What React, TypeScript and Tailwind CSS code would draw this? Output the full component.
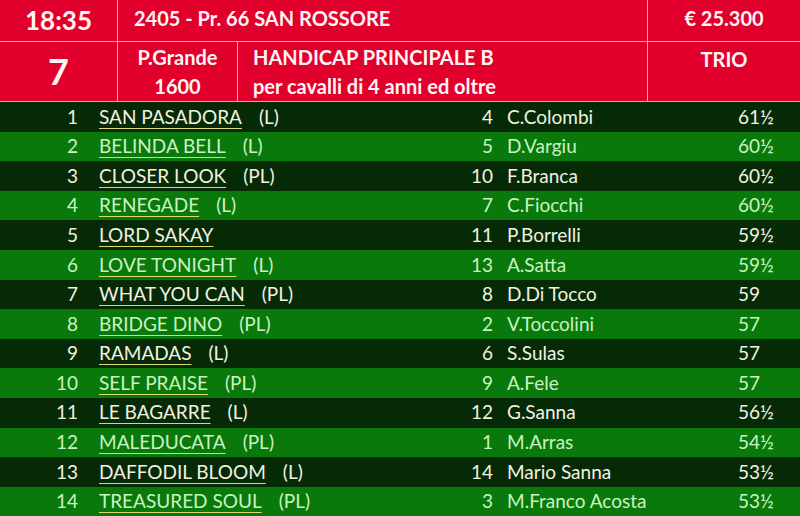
const runners = [
  { n: 1, horse: 'SAN PASADORA', tag: '(L)', j: 4, jockey: 'C.Colombi', w: '61½' },
  { n: 2, horse: 'BELINDA BELL', tag: '(L)', j: 5, jockey: 'D.Vargiu', w: '60½' },
  { n: 3, horse: 'CLOSER LOOK', tag: '(PL)', j: 10, jockey: 'F.Branca', w: '60½' },
  { n: 4, horse: 'RENEGADE', tag: '(L)', j: 7, jockey: 'C.Fiocchi', w: '60½' },
  { n: 5, horse: 'LORD SAKAY', tag: '', j: 11, jockey: 'P.Borrelli', w: '59½' },
  { n: 6, horse: 'LOVE TONIGHT', tag: '(L)', j: 13, jockey: 'A.Satta', w: '59½' },
  { n: 7, horse: 'WHAT YOU CAN', tag: '(PL)', j: 8, jockey: 'D.Di Tocco', w: '59' },
  { n: 8, horse: 'BRIDGE DINO', tag: '(PL)', j: 2, jockey: 'V.Toccolini', w: '57' },
  { n: 9, horse: 'RAMADAS', tag: '(L)', j: 6, jockey: 'S.Sulas', w: '57' },
  { n: 10, horse: 'SELF PRAISE', tag: '(PL)', j: 9, jockey: 'A.Fele', w: '57' },
  { n: 11, horse: 'LE BAGARRE', tag: '(L)', j: 12, jockey: 'G.Sanna', w: '56½' },
  { n: 12, horse: 'MALEDUCATA', tag: '(PL)', j: 1, jockey: 'M.Arras', w: '54½' },
  { n: 13, horse: 'DAFFODIL BLOOM', tag: '(L)', j: 14, jockey: 'Mario Sanna', w: '53½' },
  { n: 14, horse: 'TREASURED SOUL', tag: '(PL)', j: 3, jockey: 'M.Franco Acosta', w: '53½' },
]

function Header() {
  return (
    <div className="grid grid-cols-[117px_119px_409px_1fr] grid-rows-[41px_59px] gap-px bg-[#f2a3ad] border-b border-[#f2a3ad] font-bold text-[#fff4f4]">
      <div className="bg-[#e0002b] flex items-center justify-center text-[26px] pb-[1px]">18:35</div>
      <div className="bg-[#e0002b] col-span-2 flex items-center pl-[16px] pb-[6px] text-[20px]">2405 - Pr. 66 SAN ROSSORE</div>
      <div className="bg-[#e0002b] flex items-center justify-center pb-[6px] text-[20px]">€ 25.300</div>
      <div className="bg-[#e0002b] flex items-center justify-center text-[36px] leading-none pb-[2px]">7</div>
      <div className="bg-[#e0002b] flex flex-col items-center justify-center text-[20px] leading-[29px]">
        <span>P.Grande</span>
        <span>1600</span>
      </div>
      <div className="bg-[#e0002b] flex flex-col justify-center pl-[15px] text-[20px] leading-[29px]">
        <span>HANDICAP PRINCIPALE B</span>
        <span>per cavalli di 4 anni ed oltre</span>
      </div>
      <div className="bg-[#e0002b] flex justify-center pt-[2px] text-[20px]">TRIO</div>
    </div>
  )
}

export default function App() {
  return (
    <div className="w-[800px] h-[516px] overflow-hidden bg-[#062a06]" style={{ fontFamily: 'Lato, "Open Sans", sans-serif' }}>
      <Header />
      <div className="flex flex-col text-[19px]">
        {runners.map((r, i) => {
          const green = i % 2 === 1
          return (
            <div
              key={r.n}
              className={
                green
                  ? 'h-[29.6px] flex items-center bg-[#0a790c] text-[#c9f3c0]'
                  : 'h-[29.6px] flex items-center bg-[#062a06] text-[#f3f1e2]'
              }
            >
              <div className="w-[78px] text-right">{r.n}</div>
              <div className="w-[300px] pl-[21px] whitespace-nowrap">
                <span className="underline decoration-[#dcd86a] underline-offset-[4px]">{r.horse}</span>
                {r.tag && <span className="ml-[17px]">{r.tag}</span>}
              </div>
              <div className="w-[115px] text-right">{r.j}</div>
              <div className="w-[245px] pl-[14px] whitespace-nowrap">{r.jockey}</div>
              <div className="flex-1">{r.w}</div>
            </div>
          )
        })}
      </div>
    </div>
  )
}
